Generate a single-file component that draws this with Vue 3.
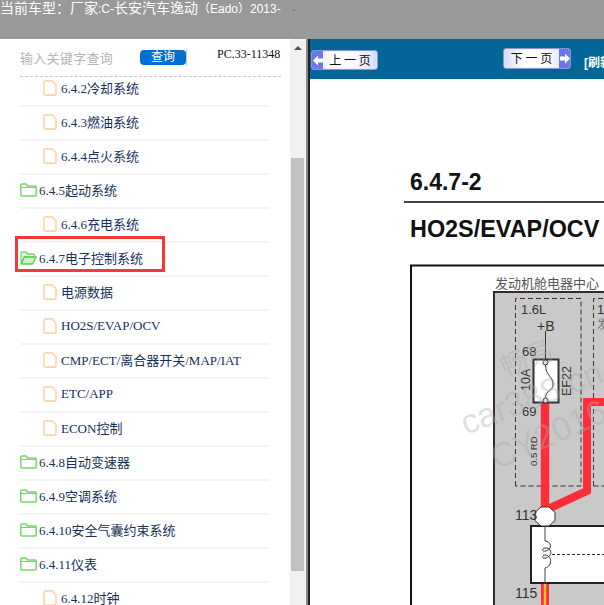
<script setup>
const rows = [
  { t: 'doc', label: '6.4.2冷却系统' },
  { t: 'doc', label: '6.4.3燃油系统' },
  { t: 'doc', label: '6.4.4点火系统' },
  { t: 'folder', label: '6.4.5起动系统' },
  { t: 'doc', label: '6.4.6充电系统' },
  { t: 'open', label: '6.4.7电子控制系统', marked: true },
  { t: 'doc', label: '电源数据' },
  { t: 'doc', label: 'HO2S/EVAP/OCV' },
  { t: 'doc', label: 'CMP/ECT/离合器开关/MAP/IAT' },
  { t: 'doc', label: 'ETC/APP' },
  { t: 'doc', label: 'ECON控制' },
  { t: 'folder', label: '6.4.8自动变速器' },
  { t: 'folder', label: '6.4.9空调系统' },
  { t: 'folder', label: '6.4.10安全气囊约束系统' },
  { t: 'folder', label: '6.4.11仪表' },
  { t: 'doc', label: '6.4.12时钟' },
]
</script>

<template>
  <div class="app">
    <header class="topbar">
      <span class="model-label">当前车型：</span>
      <span>厂家<span class="narrow">:C-</span>长安汽车逸动<span class="narrow">（Eado）2013-</span></span>
      <span class="dot">.</span>
    </header>
    <div class="body">
      <aside class="sidebar">
        <div class="search">
          <span class="placeholder">输入关键字查询</span>
          <button class="query">查询</button>
          <span class="caret"></span>
          <span class="code">PC.33-11348</span>
        </div>
        <ul class="tree">
          <li v-for="r in rows" :key="r.label" class="row" :class="{ child: r.t === 'doc' }">
            <svg v-if="r.t === 'doc'" class="doc" width="14" height="16" viewBox="0 0 14 16">
              <path d="M2.500 .9H9l4 4.100V13.600a1.500 1.500 0 0 1-1.500 1.500h-9A1.500 1.500 0 0 1 1 13.600V2.400A1.500 1.500 0 0 1 2.500 .9Z" fill="#fff" stroke="#ffd3a6" stroke-width="1.600" />
            </svg>
            <svg v-else-if="r.t === 'folder'" class="folder" width="17" height="14" viewBox="0 0 17 14">
              <path d="M1.700 1h4.300l1.500 2h7.800a.9.900 0 0 1 .9.900v8.200a.9.900 0 0 1-.9.900H1.700a.9.900 0 0 1-.9-.9V1.900A.9.900 0 0 1 1.700 1Z" fill="#fff" stroke="#76d86c" stroke-width="1.500" />
              <path d="M1 4.500h15" stroke="#76d86c" stroke-width="1" />
            </svg>
            <svg v-else class="folder" width="17" height="14" viewBox="0 0 17 14">
              <path d="M1.700 1h4.300l1.500 2h6.300a.9.900 0 0 1 .9.900V6H4.500L1 13V1.900A.9.900 0 0 1 1.700 1Z" fill="#dff6da" stroke="#76d86c" stroke-width="1.300" />
              <path d="M4.300 6H16l-3 6.300a1 1 0 0 1-.9.700H1.500Z" fill="#cdf2c6" stroke="#62c758" stroke-width="1.300" />
            </svg>
            <span>{{ r.label }}</span>
            <i v-if="r.marked" class="mark"></i>
          </li>
        </ul>
      </aside>
      <div class="scrollbar">
        <span class="arrow"></span>
        <span class="thumb"></span>
      </div>
      <main class="viewer">
        <nav class="toolbar">
          <button class="page-btn prev"><span class="cap">
            <svg width="10" height="11" viewBox="0 0 10 11"><path d="M0 5.500 5 .5V3.500h5v4H5v3Z" fill="#fff" /></svg>
          </span><span class="lbl">上 一 页</span></button>
          <button class="page-btn next"><span class="lbl">下 一 页</span><span class="cap">
            <svg width="10" height="11" viewBox="0 0 10 11"><path d="M10 5.500 5 .5V3.500H0v4h5v3Z" fill="#fff" /></svg>
          </span></button>
          <span class="refresh">[刷新]</span>
        </nav>
        <article class="page">
          <h1 class="num">6.4.7-2</h1>
          <h2 class="name">HO2S/EVAP/OCV</h2>
          <svg class="diagram" width="200" height="345" viewBox="404 260 200 345">
            <path d="M411 605V265.500H604" fill="none" stroke="#111" stroke-width="2" />
            <text x="495" y="288" class="cn">发动机舱电器中心</text>
            <rect x="494" y="292" width="120" height="320" fill="#c9c9c9" stroke="#3a2a2a" stroke-width="2" />

            <path d="M515.500 486V298.500H581V486H515.500M593.500 486V298.500H610M593.500 486H610" fill="none" stroke="#333" stroke-width="1" stroke-dasharray="5 3" />

            <path d="M545 402V507" stroke="#ff2d38" stroke-width="8.500" fill="none" />
            <path d="M548 509 587 491V402H610" stroke="#ff2d38" stroke-width="8" fill="none" />
            <path d="M545 584V610" stroke="#ff2d38" stroke-width="8" />
            <path d="M545 584V610" stroke="#f7c62f" stroke-width="2.500" />

            <text x="521" y="314" class="lb">1.6L</text>
            <text x="537" y="331" class="lb big">+B</text>
            <path d="M545.500 331V360" stroke="#333" stroke-width="1" />
            <text x="522" y="356" class="lb">68</text>
            <text x="522" y="416" class="lb">69</text>
            <rect x="533.500" y="359.500" width="25" height="43" fill="#fff" stroke="#333" stroke-width="2" />
            <path d="M545.500 365C545.500 376 553 376 553 384S545.500 390 545.500 398" fill="none" stroke="#333" stroke-width="1" />
            <circle cx="545.500" cy="362.500" r="2.500" fill="#ddd" stroke="#333" />
            <circle cx="545.500" cy="400.500" r="2.500" fill="#ddd" stroke="#333" />
            <text transform="translate(530 391) rotate(-90)" class="lb mid">10A</text>
            <text transform="translate(571 396) rotate(-90)" class="lb mid">EF22</text>
            <text transform="translate(537 466) rotate(-90)" class="rd">0.5 RD</text>
            <text x="597" y="314" class="lb">1</text>
            <text x="597" y="329" class="cn small">发</text>

            <rect x="531" y="526" width="90" height="57" fill="#fff" stroke="#222" stroke-width="2" />
            <path d="M545 525V541M545 568V584" stroke="#444" stroke-width="1" />
            <path d="M545 541C551 541 553 549 546 551C541 552 542 548 545 548C552 547 553 556 546 558C541 559 542 555 545 555C552 555 553 566 545 568" fill="none" stroke="#333" stroke-width="1" />
            <path d="M552 554.500H604" stroke="#333" stroke-width="1" stroke-dasharray="3 2" />
            <path d="M541 507h8l6 5.500v8l-6 5.500h-8l-6-5.500v-8Z" fill="#fff" stroke="#333" />
            <text x="515" y="520" class="lb big">113</text>
            <text x="515" y="598" class="lb big">115</text>

            <g class="wm">
              <text transform="translate(505 377) rotate(-21)" class="wm-cn">畅易</text>
              <text transform="translate(466 435) rotate(-21)">car388.cn</text>
              <text transform="translate(497 470) rotate(-24)">CY2016S</text>
            </g>
          </svg>
        </article>
      </main>
    </div>
  </div>
</template>

<style scoped>
.app {
  width: 604px;
  height: 605px;
  display: flex;
  flex-direction: column;
  overflow: hidden;
  font-family: "Liberation Serif", "Noto Sans CJK SC", serif;
}
.topbar {
  height: 39px;
  flex: none;
  background: #999999;
  color: #fff;
  font: 14px/16px "Liberation Sans", "Noto Sans CJK SC", sans-serif;
  display: flex;
  align-items: flex-start;
}
.model-label { width: 70px; flex: none; }
.narrow { font-size: 12px; }
.dot { margin-left: 12px; color: #444; font-size: 10px; }
.body { flex: 1; display: flex; min-height: 0; }
.sidebar {
  width: 290px;
  flex: none;
  background: #fff;
  overflow: hidden;
}
.search {
  height: 37px;
  margin: 0 9px 0 20px;
  border-bottom: 1px dashed #c8c8c8;
  box-sizing: content-box;
  display: flex;
  position: relative;
  align-items: flex-start;
}
.placeholder {
  font: 13px/20px "Liberation Sans", "Noto Sans CJK SC", sans-serif;
  letter-spacing: .3px;
  color: #b4b4b4;
  margin-top: 10px;
  width: 120px;
}
.query {
  width: 46px;
  height: 15px;
  margin-top: 11px;
  padding: 0;
  border: 0;
  border-radius: 4px;
  background: #0070d0;
  color: #fff;
  font: 12px/15px "Liberation Sans", "Noto Sans CJK SC", sans-serif;
}
.caret { width: 1px; height: 17px; margin-top: 10px; background: #c4cdd8; }
.code {
  margin: 8px 0 0 30px;
  font-size: 12px;
  line-height: 14px;
  color: #111;
  white-space: nowrap;
}
.tree {
  list-style: none;
  margin: -4px 0 0 20px;
  padding: 0;
  width: 249px;
}
.row {
  height: 34px;
  box-sizing: border-box;
  border-bottom: 2px solid #f4f4f4;
  display: flex;
  align-items: center;
  position: relative;
  font-size: 13px;
  color: #16305a;
  white-space: nowrap;
  padding-bottom: 3px;
}
.child { padding-left: 23px; }
.doc { flex: none; margin-right: 4px; }
.folder { flex: none; margin-right: 2px; }
.mark {
  position: absolute;
  left: -5px;
  top: -7px;
  width: 150px;
  height: 36px;
  box-sizing: border-box;
  border: 3px solid #f53838;
}
.scrollbar {
  width: 16px;
  flex: none;
  background: #f1f1f1;
  display: flex;
  flex-direction: column;
  align-items: center;
  padding-top: 7px;
  box-sizing: border-box;
}
.arrow {
  width: 0;
  height: 0;
  border: 4px solid transparent;
  border-top: 0;
  border-bottom: 4px solid #505050;
}
.thumb {
  width: 13px;
  height: 413px;
  margin-top: 108px;
  margin-left: -1px;
  background: #c1c1c1;
}
.viewer {
  flex: 1;
  min-width: 0;
  background: #fff;
  border-left: 2px solid #888;
  box-shadow: inset 2px 0 0 #222;
  padding-left: 2px;
  overflow: hidden;
}
.toolbar {
  height: 40px;
  background: #036699;
  display: flex;
  align-items: flex-start;
  white-space: nowrap;
  overflow: hidden;
}
.page-btn {
  height: 20px;
  padding: 0;
  display: flex;
  align-items: stretch;
  flex: none;
  border: 1px solid #8a94d8;
  border-radius: 3px;
  box-shadow: 0 0 0 .5px #e8e8ff inset;
  overflow: hidden;
  background: linear-gradient(90deg, #d6dafc, #fff 30%, #fff 60%, #d8dbfa);
  color: #111;
  font: 12px/18px "Noto Sans CJK SC", sans-serif;
}
.prev { width: 67px; margin: 11px 0 0 1px; }
.next { width: 68px; height: 21px; margin: 9px 0 0 125px; }
.cap {
  width: 11px;
  flex: none;
  background: #6a78e6;
  display: flex;
  align-items: center;
  justify-content: center;
}
.lbl { flex: 1; text-align: center; }
.refresh {
  margin: 16px 0 0 13px;
  color: #fff;
  font: bold 12px/16px "Liberation Sans", "Noto Sans CJK SC", sans-serif;
}
.page { padding: 90px 0 0 94px; }
.num, .name {
  margin: 0;
  padding-left: 6px;
  font: bold 23px/26px "Liberation Sans", sans-serif;
  color: #111;
  white-space: nowrap;
}
.num { padding-bottom: 6px; border-bottom: 2px solid #444; }
.name { margin-top: 13px; font-size: 23.400px; }
.diagram { display: block; margin-top: 18px; }
.diagram text { font-family: "Liberation Sans", "Noto Sans CJK SC", sans-serif; fill: #333; }
.diagram .cn { font-size: 13px; fill: #555; }
.diagram .small { font-size: 12px; fill: #777; }
.diagram .lb { font-size: 13px; }
.diagram .big { font-size: 14px; }
.diagram .mid { font-size: 12.500px; }
.diagram .rd { font-size: 9.500px; }
.diagram .wm text {
  font-size: 34px;
  fill: rgba(170, 170, 170, .38);
}
.diagram .wm .wm-cn { font-size: 27px; }
</style>

<style>
html, body { margin: 0; overflow: hidden; background: #fff; }
</style>
